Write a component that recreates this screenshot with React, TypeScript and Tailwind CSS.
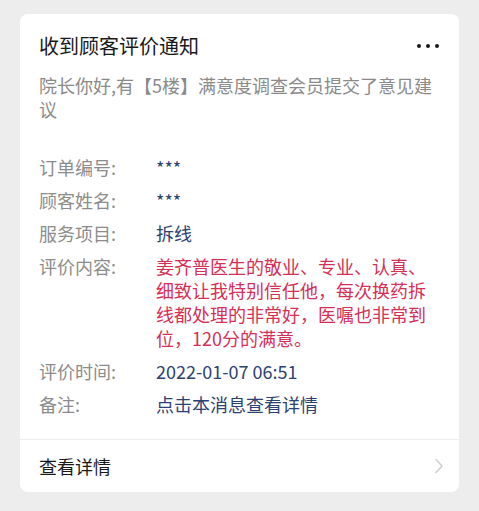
const rows: { label: string; value: string; tone?: 'red' }[] = [
  { label: '订单编号:', value: '***' },
  { label: '顾客姓名:', value: '***' },
  { label: '服务项目:', value: '拆线' },
  {
    label: '评价内容:',
    value: '姜齐普医生的敬业、专业、认真、细致让我特别信任他，每次换药拆线都处理的非常好，医嘱也非常到位，120分的满意。',
    tone: 'red',
  },
  { label: '评价时间:', value: '2022-01-07 06:51' },
  { label: '备注:', value: '点击本消息查看详情' },
];

export default function App() {
  return (
    <div
      className="min-h-[511px] w-full bg-[#ededed] px-5 pt-[14px]"
      style={{ fontFamily: '"Noto Sans CJK SC", "Noto Sans", sans-serif' }}
    >
      <div className="rounded-lg bg-white">
        <div className="px-[19px] pt-[18px] pb-[23px]">
          <div className="flex items-center justify-between">
            <h1 className="text-[20px] leading-[28px] text-[#191919]">收到顾客评价通知</h1>
            <div className="mr-[1px] flex gap-[5px]">
              <span className="h-1 w-1 rounded-full bg-[#191919]" />
              <span className="h-1 w-1 rounded-full bg-[#191919]" />
              <span className="h-1 w-1 rounded-full bg-[#191919]" />
            </div>
          </div>
          <p className="mt-[13px] text-[18px] leading-[24px] text-[#8a8a8a]">
            院长你好,有【5楼】满意度调查会员提交了意见建议
          </p>

          <div className="mt-[34px] flex flex-col gap-[9px]">
            {rows.map((r) => (
              <div key={r.label} className="flex">
                <span className="w-[117px] shrink-0 text-[18px] leading-[24px] text-[#8c8c8c]">
                  {r.label}
                </span>
                <span
                  className={
                    r.tone === 'red'
                      ? 'flex-1 text-[18px] leading-[24px] text-[#d62f55]'
                      : 'flex-1 text-[18px] leading-[24px] text-[#2c4272]'
                  }
                >
                  {r.value}
                </span>
              </div>
            ))}
          </div>
        </div>

        <div className="flex h-[53px] items-center justify-between border-t border-[#ededed] pl-[19px] pr-[15px]">
          <span className="text-[18px] text-[#191919]">查看详情</span>
          <svg width="10" height="16" viewBox="0 0 10 16" fill="none">
            <path d="M2 1.5L8 8L2 14.5" stroke="#d0d0d0" strokeWidth="1.6" strokeLinecap="round" strokeLinejoin="round" />
          </svg>
        </div>
      </div>
    </div>
  );
}
